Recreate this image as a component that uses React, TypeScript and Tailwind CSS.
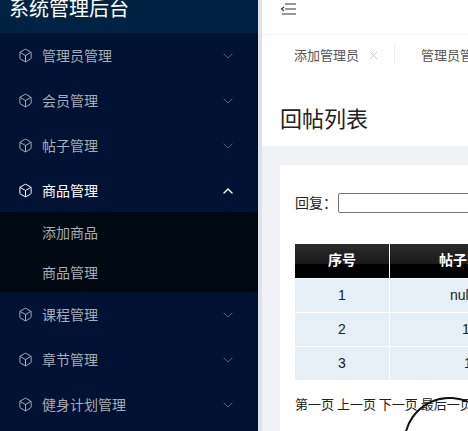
import { ChevronDown, ChevronUp, Box, X } from "lucide-react";

const font = { fontFamily: '"Noto Sans CJK SC", "Liberation Sans", sans-serif' };

function MenuItem({ label, open }: { label: string; open?: boolean }) {
  return (
    <div className={`flex h-[45px] items-center pl-[18px] pr-[22px] ${open ? "text-white" : "text-[#a6adb4]"}`}>
      <Box className="h-[15px] w-[15px]" strokeWidth={1.6} />
      <span className="ml-[9px] flex-1 text-[14px]">{label}</span>
      {open ? <ChevronUp className="h-4 w-4" strokeWidth={2} /> : <ChevronDown className="h-4 w-4 opacity-50" strokeWidth={1.5} />}
    </div>
  );
}

export default function App() {
  return (
    <div className="flex h-[431px] w-[468px] overflow-hidden bg-white" style={font}>
      <div className="flex w-[258px] shrink-0 flex-col bg-[#001233]">
        <div className="h-[33px] bg-[#002243] pl-[9px] text-[20px] leading-[20px] text-white">
          <div className="-mt-[2px]">系统管理后台</div>
        </div>
        <MenuItem label="管理员管理" />
        <MenuItem label="会员管理" />
        <MenuItem label="帖子管理" />
        <MenuItem label="商品管理" open />
        <div className="-mt-[1px] bg-[#000912] text-[14px] text-[#a6adb4]">
          <div className="flex h-[40px] items-center pl-[42px]">添加商品</div>
          <div className="flex h-[40px] items-center pl-[42px]">商品管理</div>
        </div>
        <MenuItem label="课程管理" />
        <MenuItem label="章节管理" />
        <MenuItem label="健身计划管理" />
      </div>
      <div className="w-[4px] shrink-0 bg-[#dfe3e8]" />
      <div className="relative flex flex-1 flex-col bg-[#f0f2f5]">
        <div className="h-[34px] bg-white pl-[18px] pt-[1px]">
          <svg width="18" height="16" viewBox="0 0 18 16" fill="none" stroke="#333" strokeWidth="1.2">
            <path d="M5 3h11M5 8h11M2 13h14M4 6L1.5 8 4 10" />
          </svg>
        </div>
        <div className="flex h-[41px] items-center border-t border-[#f4f4f4] bg-white text-[13px] text-[#555]">
          <div className="flex items-center pl-[32px] pr-[14px]">
            添加管理员 <X className="ml-[8px] h-[13px] w-[13px] text-[#bbb]" strokeWidth={1.5} />
          </div>
          <div className="whitespace-nowrap border-l border-[#f0f0f0] pl-[26px]">管理员管理</div>
        </div>
        <div className="h-[71px] bg-white pl-[18px] pt-[29px] text-[22px] leading-[26px] text-[#222]">回帖列表</div>
        <div className="flex-1 pl-[18px] pt-[19px]">
          <div className="h-full bg-white pl-[15px] pt-[27px]">
            <div className="flex items-center text-[14px] text-[#222]">
              回复：<div className="ml-[1px] h-[20px] flex-1 rounded-[2px] border border-[#767676] bg-white" />
            </div>
            <table className="mt-[31px] w-[200px] border-collapse text-[14px]" style={{ fontFamily: '"Liberation Sans", "Noto Sans CJK SC", sans-serif' }}>
              <thead>
                <tr className="h-[34px] text-white" style={{ background: "linear-gradient(#2a2a2a 0%, #1a1a1a 60%, #000 60%)" }}>
                  <th className="w-[96px] border-r border-white font-bold">序号</th>
                  <th className="whitespace-nowrap text-left pl-[49px] font-bold">帖子内容</th>
                </tr>
              </thead>
              <tbody className="text-[#222]">
                {[["1", "null", "pl-[60px]"], ["2", "1", "pl-[72px]"], ["3", "1", "pl-[74px]"]].map(([a, b, p], i) => (
                  <tr key={i} className="h-[34px] bg-[#e5eff5] border-t border-white">
                    <td className="border-r border-white text-center">{a}</td>
                    <td className={p}>{b}</td>
                  </tr>
                ))}
              </tbody>
            </table>
            <div className="mt-[14px] whitespace-nowrap text-[13px] text-[#222]">第一页 上一页 下一页 最后一页</div>
          </div>
        </div>
        <svg className="absolute left-[140px] top-[396px]" width="80" height="40" viewBox="0 0 80 40" fill="none">
          <path d="M3 40 A45 45 0 0 1 70 8" stroke="#111" strokeWidth="2" />
        </svg>
      </div>
    </div>
  );
}
